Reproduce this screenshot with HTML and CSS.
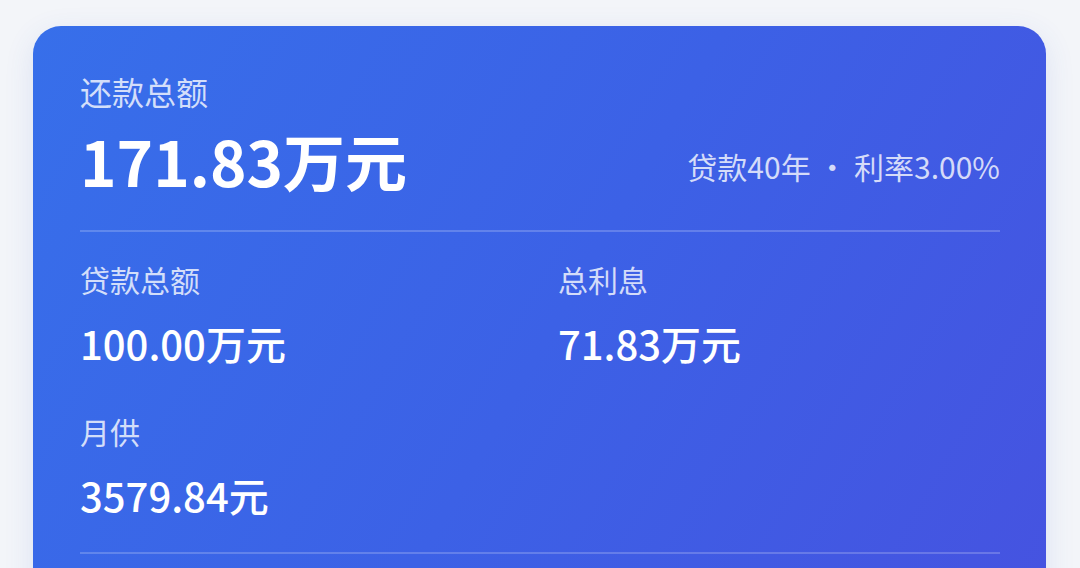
FILE: index.html
```html
<!DOCTYPE html>
<html lang="zh-CN">
<head>
    <meta charset="UTF-8">
    <meta name="viewport" content="width=device-width, initial-scale=1.0">
    <title>房贷计算结果</title>
    <link rel="stylesheet" href="styles.css">
</head>
<body>
    <div class="card">
        <p class="total-label">还款总额</p>
        <div class="total-row">
            <p class="total-value">171.83万元</p>
            <p class="meta">贷款40年 · 利率3.00%</p>
        </div>
        <div class="line"></div>
        <div class="grid">
            <div class="item">
                <p class="label">贷款总额</p>
                <p class="value">100.00万元</p>
            </div>
            <div class="item">
                <p class="label">总利息</p>
                <p class="value">71.83万元</p>
            </div>
            <div class="item">
                <p class="label">月供</p>
                <p class="value">3579.84元</p>
            </div>
        </div>
        <div class="line"></div>
        <div class="spacer"></div>
    </div>
</body>
</html>
```

FILE: styles.css
```css
body {
    margin: 0;
    padding: 26px 34px 0 33px;
    background: #f3f5f9;
    font-family: "Noto Sans CJK SC", "Noto Sans", sans-serif;
    overflow: hidden;
}
p {
    margin: 0;
}
.card {
    background: linear-gradient(120deg, #376fea 0%, #3c61e6 50%, #4652e0 100%);
    border-radius: 28px;
    padding: 45px 46px 0 47px;
    color: #fff;
    box-shadow: 0 8px 30px rgba(60, 90, 200, 0.12);
}
.total-label {
    font-size: 32px;
    line-height: 40px;
    color: rgba(255, 255, 255, 0.78);
}
.total-row {
    display: flex;
    justify-content: space-between;
    align-items: center;
    margin-top: 9px;
}
.total-value {
    font-size: 62px;
    line-height: 80px;
    font-weight: 700;
}
.meta {
    font-size: 30px;
    line-height: 40px;
    margin-top: 12px;
    color: rgba(255, 255, 255, 0.78);
}
.line {
    height: 2px;
    background: rgba(255, 255, 255, 0.2);
    margin-top: 30px;
}
.grid {
    display: grid;
    grid-template-columns: 1fr 1fr;
    column-gap: 36px;
    row-gap: 43px;
    padding-top: 27px;
}
.grid + .line {
    margin-top: 32px;
}
.label {
    font-size: 30px;
    line-height: 40px;
    color: rgba(255, 255, 255, 0.78);
}
.value {
    font-size: 40px;
    line-height: 50px;
    font-weight: 500;
    margin-top: 19px;
}
.spacer {
    height: 120px;
}
```
